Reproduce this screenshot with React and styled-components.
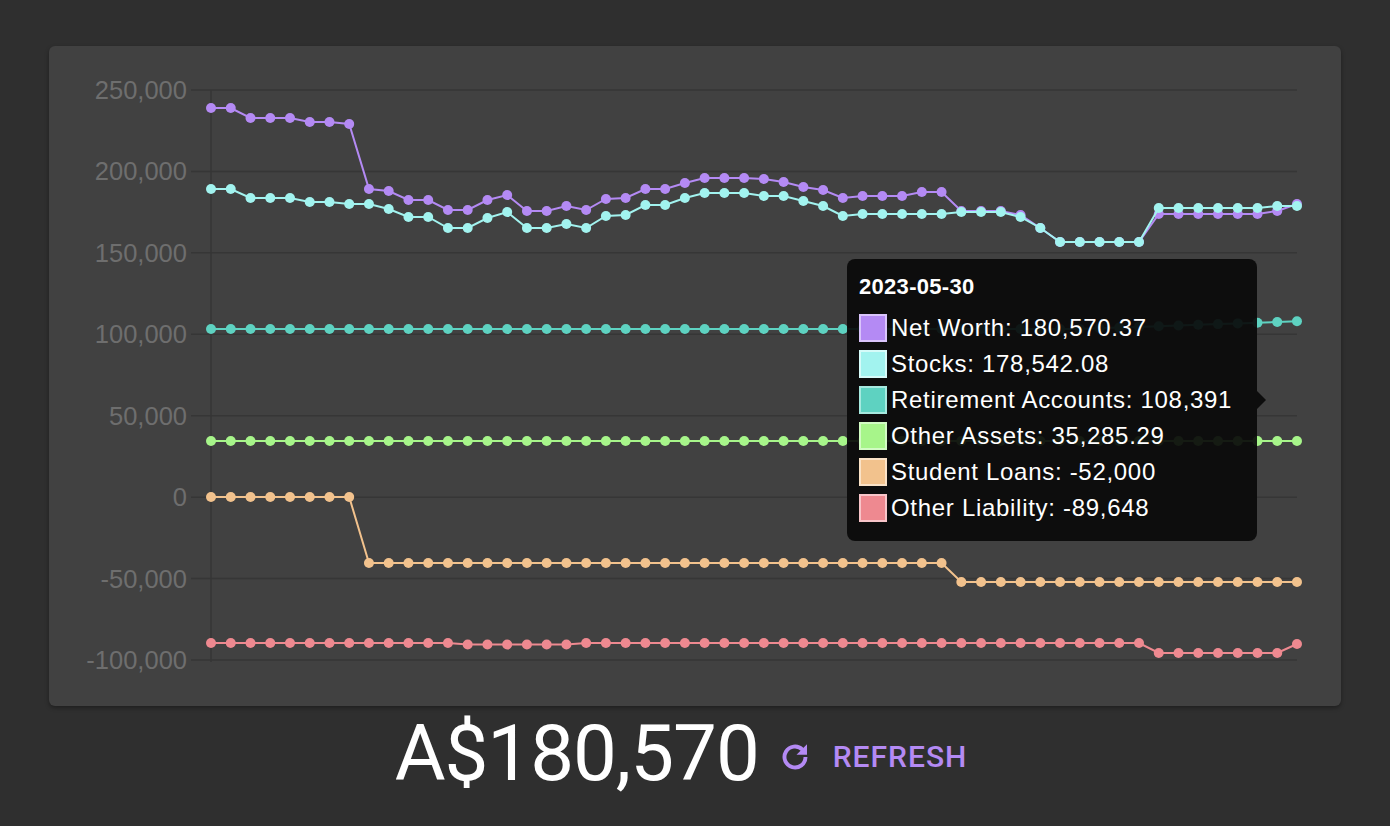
import React from 'react'
import styled, { createGlobalStyle } from 'styled-components'

const Global = createGlobalStyle`
  html, body { margin: 0; background: #2f2f2f; }
  body { font-family: Roboto, "Liberation Sans", sans-serif; }
`

const X0 = 212
const STEP = 19.745

const series = [
  {
    name: 'Net Worth', value: '180,570.37', color: '#b48af4', border: '#d9c4fb',
    ys: [108,108,118,118,118,122,122,124,189,191,200,200,210,210,200,195,211,211,206,210,199,198,189,189,183,178,178,178,179,182,187,190,198,196,196,196,192,192,211,211,211,215,228,242,242,242,242,242,214,214,214,214,214,214,211,204],
  },
  {
    name: 'Stocks', value: '178,542.08', color: '#a2f3ef', border: '#d6fbf9',
    ys: [189,189,198,198,198,202,202,204,204,209,217,217,228,228,218,212,228,228,224,228,216,215,205,205,198,193,193,193,196,196,201,206,216,214,214,214,214,214,212,212,212,217,228,242,242,242,242,242,208,208,208,208,208,208,206,206],
  },
  {
    name: 'Retirement Accounts', value: '108,391', color: '#5ed2c1', border: '#a6e9df',
    ys: Array.from({ length: 56 }, (_, i) => (i < 44 ? 329 : 329 - (i - 44) * 0.7)),
  },
  {
    name: 'Other Assets', value: '35,285.29', color: '#a7f58a', border: '#d2fbc4',
    ys: Array.from({ length: 56 }, () => 441),
  },
  {
    name: 'Student Loans', value: '-52,000', color: '#f2c28d', border: '#fae2c7',
    ys: Array.from({ length: 56 }, (_, i) => (i < 8 ? 497 : i < 38 ? 563 : 582)),
  },
  {
    name: 'Other Liability', value: '-89,648', color: '#ee8990', border: '#f8c5c9',
    ys: Array.from({ length: 56 }, (_, i) => (i === 55 ? 644 : i >= 48 ? 653 : i >= 13 && i <= 18 ? 644.5 : 643)),
  },
]

const ticks = ['250,000', '200,000', '150,000', '100,000', '50,000', '0', '-50,000', '-100,000']
const tickY = (i) => 90 + i * 81.43

export default function App() {
  return (
    <Page>
      <Global />
      <Card>
        <Chart viewBox="50 46 1292 660">
          {ticks.map((t, i) => (
            <g key={t}>
              <line x1="192" x2="1298" y1={tickY(i)} y2={tickY(i)} stroke="#363636" strokeWidth="1.5" />
              <text x="188" y={tickY(i) + 9} textAnchor="end" fill="#6e6e6e" fontSize="25.5" fontFamily="'Liberation Sans', sans-serif">{t}</text>
            </g>
          ))}
          <line x1="212" x2="212" y1="90" y2="662" stroke="#363636" strokeWidth="1.5" />
          {series.map((s) => (
            <g key={s.name}>
              <polyline
                fill="none"
                stroke={s.color}
                strokeWidth="2"
                points={s.ys.map((y, i) => `${X0 + i * STEP},${y}`).join(' ')}
              />
              {s.ys.map((y, i) => (
                <circle key={i} cx={X0 + i * STEP} cy={y} r="5" fill={s.color} />
              ))}
            </g>
          ))}
        </Chart>
        <Tooltip>
          <TipTitle>2023-05-30</TipTitle>
          {series.map((s) => (
            <TipRow key={s.name}>
              <Swatch $color={s.color} $border={s.border} />
              {s.name}: {s.value}
            </TipRow>
          ))}
        </Tooltip>
      </Card>
      <Footer>
        <Amount>A$180,570</Amount>
        <Refresh>
          <svg width="36" height="36" viewBox="0 0 24 24" fill="none">
            <path d="M19 12a7 7 0 1 1-2.05-4.95" stroke="#b48af4" strokeWidth="2.6" strokeLinecap="butt" />
            <path d="M20 3.5v7h-7z" fill="#b48af4" />
          </svg>
          <span>REFRESH</span>
        </Refresh>
      </Footer>
    </Page>
  )
}

const Page = styled.div`
  display: flex;
  flex-direction: column;
  align-items: center;
  padding-top: 46px;
  height: 780px;
`

const Card = styled.div`
  position: relative;
  width: 1292px;
  height: 660px;
  background: #414141;
  border-radius: 6px;
  box-shadow: 0 2px 4px rgba(0, 0, 0, 0.35);
`

const Chart = styled.svg`
  display: block;
  width: 1292px;
  height: 660px;
`

const Tooltip = styled.div`
  position: absolute;
  left: 798px;
  top: 213px;
  width: 410px;
  height: 282px;
  box-sizing: border-box;
  padding: 14px 12px 10px 12px;
  background: rgba(10, 10, 10, 0.93);
  border-radius: 8px;
  color: #fff;
  font-family: 'Liberation Sans', sans-serif;

  &::after {
    content: '';
    position: absolute;
    right: -9px;
    top: 132px;
    border-top: 9px solid transparent;
    border-bottom: 9px solid transparent;
    border-left: 9px solid rgba(10, 10, 10, 0.93);
  }
`

const TipTitle = styled.div`
  font-weight: 700;
  font-size: 22px;
  line-height: 28px;
  margin-bottom: 9px;
  letter-spacing: 0.3px;
`

const TipRow = styled.div`
  display: flex;
  align-items: center;
  font-size: 24px;
  line-height: 36px;
  letter-spacing: 0.7px;
  white-space: nowrap;
`

const Swatch = styled.span`
  width: 24px;
  height: 24px;
  margin-right: 4px;
  background: ${(p) => p.$color};
  border: 2px solid ${(p) => p.$border};
`

const Footer = styled.div`
  display: flex;
  align-items: center;
  gap: 18px;
  margin-top: 2px;
  margin-left: -28px;
`

const Amount = styled.div`
  color: #fff;
  font-size: 78px;
  font-weight: 400;
  letter-spacing: -1px;
`

const Refresh = styled.div`
  display: flex;
  align-items: center;
  gap: 20px;
  color: #b48af4;
  font-size: 30px;
  font-weight: 500;
  letter-spacing: 1px;
  padding-top: 6px;
`
